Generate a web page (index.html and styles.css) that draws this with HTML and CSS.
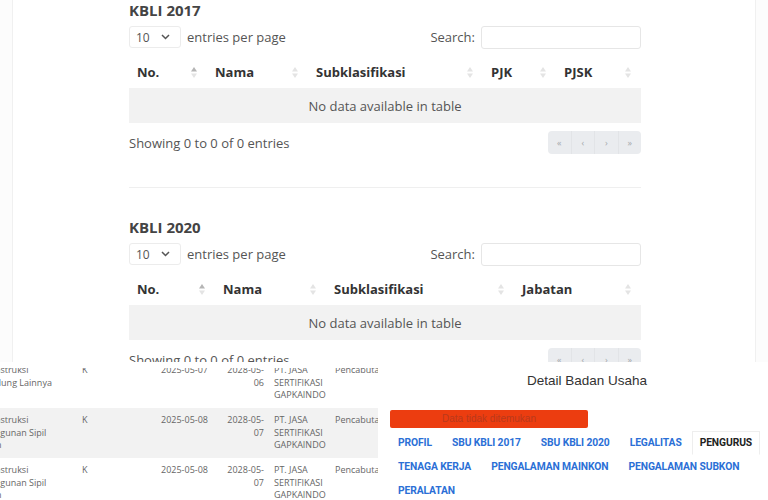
FILE: index.html
```html
<!DOCTYPE html>
<html lang="id">
<head>
    <meta charset="UTF-8">
    <meta name="viewport" content="width=device-width, initial-scale=1.0">
    <title>KBLI</title>
    <link rel="stylesheet" href="styles.css">
</head>
<body>
    <div class="top-panel">
        <section class="kbli">
            <h3>KBLI 2017</h3>
            <div class="dt-top">
                <label class="length">
                    <span class="select">10
                        <svg width="9" height="6" viewBox="0 0 9 6"><path d="M1 1l3.5 3.5L8 1" fill="none" stroke="#555" stroke-width="1.5"/></svg>
                    </span>
                    entries per page
                </label>
                <label class="search">Search: <input type="text"></label>
            </div>
            <table class="dt">
                <colgroup>
                    <col style="width:78px"><col style="width:101px"><col style="width:175px"><col style="width:73px"><col style="width:85px">
                </colgroup>
                <thead>
                    <tr>
                        <th><div class="th">No. <svg class="sort asc" width="6" height="11" viewBox="0 0 6 11"><path class="up" d="M0 4.5L3 0l3 4.5z"/><path class="down" d="M0 6.5L3 11l3-4.5z"/></svg></div></th>
                        <th><div class="th">Nama <svg class="sort" width="6" height="11" viewBox="0 0 6 11"><path class="up" d="M0 4.5L3 0l3 4.5z"/><path class="down" d="M0 6.5L3 11l3-4.5z"/></svg></div></th>
                        <th><div class="th">Subklasifikasi <svg class="sort" width="6" height="11" viewBox="0 0 6 11"><path class="up" d="M0 4.5L3 0l3 4.5z"/><path class="down" d="M0 6.5L3 11l3-4.5z"/></svg></div></th>
                        <th><div class="th">PJK <svg class="sort" width="6" height="11" viewBox="0 0 6 11"><path class="up" d="M0 4.5L3 0l3 4.5z"/><path class="down" d="M0 6.5L3 11l3-4.5z"/></svg></div></th>
                        <th><div class="th">PJSK <svg class="sort" width="6" height="11" viewBox="0 0 6 11"><path class="up" d="M0 4.5L3 0l3 4.5z"/><path class="down" d="M0 6.5L3 11l3-4.5z"/></svg></div></th>
                    </tr>
                </thead>
                <tbody>
                    <tr><td colspan="5" class="empty">No data available in table</td></tr>
                </tbody>
            </table>
            <div class="dt-bottom">
                <span>Showing 0 to 0 of 0 entries</span>
                <div class="pager"><span>«</span><span>‹</span><span>›</span><span>»</span></div>
            </div>
        </section>

        <hr class="divider">

        <section class="kbli">
            <h3>KBLI 2020</h3>
            <div class="dt-top">
                <label class="length">
                    <span class="select">10
                        <svg width="9" height="6" viewBox="0 0 9 6"><path d="M1 1l3.5 3.5L8 1" fill="none" stroke="#555" stroke-width="1.5"/></svg>
                    </span>
                    entries per page
                </label>
                <label class="search">Search: <input type="text"></label>
            </div>
            <table class="dt">
                <colgroup>
                    <col style="width:86px"><col style="width:111px"><col style="width:188px"><col style="width:127px">
                </colgroup>
                <thead>
                    <tr>
                        <th><div class="th">No. <svg class="sort asc" width="6" height="11" viewBox="0 0 6 11"><path class="up" d="M0 4.5L3 0l3 4.5z"/><path class="down" d="M0 6.5L3 11l3-4.5z"/></svg></div></th>
                        <th><div class="th">Nama <svg class="sort" width="6" height="11" viewBox="0 0 6 11"><path class="up" d="M0 4.5L3 0l3 4.5z"/><path class="down" d="M0 6.5L3 11l3-4.5z"/></svg></div></th>
                        <th><div class="th">Subklasifikasi <svg class="sort" width="6" height="11" viewBox="0 0 6 11"><path class="up" d="M0 4.5L3 0l3 4.5z"/><path class="down" d="M0 6.5L3 11l3-4.5z"/></svg></div></th>
                        <th><div class="th">Jabatan <svg class="sort" width="6" height="11" viewBox="0 0 6 11"><path class="up" d="M0 4.5L3 0l3 4.5z"/><path class="down" d="M0 6.5L3 11l3-4.5z"/></svg></div></th>
                    </tr>
                </thead>
                <tbody>
                    <tr><td colspan="4" class="empty">No data available in table</td></tr>
                </tbody>
            </table>
            <div class="dt-bottom">
                <span>Showing 0 to 0 of 0 entries</span>
                <div class="pager"><span>«</span><span>‹</span><span>›</span><span>»</span></div>
            </div>
        </section>
    </div>

    <div class="bottom">
        <div class="shot-left">
            <div class="clip">
                <table class="sbu">
                    <colgroup>
                        <col style="width:98px"><col style="width:74px"><col style="width:62px"><col style="width:56px"><col style="width:62px"><col style="width:70px">
                    </colgroup>
                    <tbody>
                        <tr>
                            <td>Konstruksi<br>Gedung Lainnya</td>
                            <td>K</td>
                            <td class="num">2025-05-07</td>
                            <td class="num end">2028-05-06</td>
                            <td class="lsp">PT. JASA SERTIFIKASI GAPKAINDO</td>
                            <td class="status">Pencabutan</td>
                        </tr>
                        <tr class="odd">
                            <td>Konstruksi<br>Bangunan Sipil<br>Lain</td>
                            <td>K</td>
                            <td class="num">2025-05-08</td>
                            <td class="num end">2028-05-07</td>
                            <td class="lsp">PT. JASA SERTIFIKASI GAPKAINDO</td>
                            <td class="status">Pencabutan</td>
                        </tr>
                        <tr>
                            <td>Konstruksi<br>Bangunan Sipil<br>Lain</td>
                            <td>K</td>
                            <td class="num">2025-05-08</td>
                            <td class="num end">2028-05-07</td>
                            <td class="lsp">PT. JASA SERTIFIKASI GAPKAINDO</td>
                            <td class="status">Pencabutan</td>
                        </tr>
                    </tbody>
                </table>
            </div>
        </div>

        <div class="shot-right">
            <div class="detail-title">Detail Badan Usaha</div>
            <div class="alert">Data tidak ditemukan</div>
            <div class="tabs">
                <span class="tab">PROFIL</span>
                <span class="tab">SBU KBLI 2017</span>
                <span class="tab">SBU KBLI 2020</span>
                <span class="tab">LEGALITAS</span>
                <span class="tab active">PENGURUS</span>
                <span class="tab">TENAGA KERJA</span>
                <span class="tab">PENGALAMAN MAINKON</span>
                <span class="tab">PENGALAMAN SUBKON</span>
                <span class="tab">PERALATAN</span>
            </div>
        </div>
    </div>
</body>
</html>
```

FILE: styles.css
```css
* {
    margin: 0;
    padding: 0;
    box-sizing: border-box;
}

body {
    width: 768px;
    height: 500px;
    overflow: hidden;
    background-color: #fcfcfc;
    font-family: "Open Sans", "Noto Sans", sans-serif;
    color: #555;
}

/* top screenshot: the two KBLI tables */

.top-panel {
    height: 362px;
    margin: 0 12px;
    padding-left: 116px;
    background: #fff;
    border-left: 1px solid #f0f0f0;
    border-right: 1px solid #f0f0f0;
    overflow: hidden;
}

.kbli {
    width: 512px;
}

.kbli h3 {
    font-size: 15px;
    line-height: 20px;
    font-weight: 700;
    color: #444;
}

.dt-top {
    display: flex;
    justify-content: space-between;
    align-items: center;
    height: 22px;
    margin: 6px 0 10px;
    font-size: 13px;
}

.length {
    display: flex;
    align-items: center;
    gap: 6px;
}

.select {
    display: flex;
    align-items: center;
    justify-content: space-between;
    width: 52px;
    height: 22px;
    padding: 0 10px 0 6px;
    border: 1px solid #ececec;
    border-radius: 3px;
    font-size: 12px;
}

.search {
    display: flex;
    align-items: center;
    gap: 6px;
}

.search input {
    width: 160px;
    height: 23px;
    border: 1px solid #e6e6e6;
    border-radius: 3px;
}

.dt {
    width: 512px;
    table-layout: fixed;
    border-collapse: collapse;
    font-size: 13px;
}

.dt th {
    height: 30px;
    padding: 0 10px 2px 8px;
    font-weight: 700;
    color: #333;
    text-align: left;
}

.th {
    display: flex;
    justify-content: space-between;
    align-items: center;
}

.sort path {
    fill: #e4e4e4;
}

.sort.asc .up {
    fill: #b5b5b5;
}

.dt .empty {
    height: 35px;
    background-color: #f2f2f2;
    text-align: center;
    color: #555;
}

.dt-bottom {
    display: flex;
    justify-content: space-between;
    align-items: center;
    margin-top: 8px;
    font-size: 13px;
}

.pager {
    display: flex;
    width: 93px;
    height: 23px;
    background-color: #eaecef;
    border-radius: 4px;
}

.pager span {
    flex: 1;
    display: flex;
    align-items: center;
    justify-content: center;
    font-size: 9px;
    color: #a5a9ad;
    border-left: 1px solid #e2e4e7;
}

.pager span:first-child {
    border-left: none;
}

.divider {
    width: 512px;
    margin: 33px 0 29px;
    border: none;
    border-top: 1px solid #efefef;
}

/* bottom row: two cropped screenshots */

.bottom {
    display: flex;
    height: 138px;
}

.shot-left {
    width: 378px;
    background: #fff;
    padding-top: 6px;
}

.shot-left .clip {
    height: 132px;
    overflow: hidden;
}

.sbu {
    width: 422px;
    margin: -10px 0 0 -22px;
    table-layout: fixed;
    border-collapse: collapse;
    font-size: 9px;
    line-height: 12.5px;
    color: #666;
}

.sbu td {
    padding: 6px 4px 6.5px 6px;
    vertical-align: top;
}

.sbu td.num {
    text-align: right;
}

.sbu td.end {
    padding-left: 12px;
}

.sbu td.status {
    padding-left: 5px;
    white-space: nowrap;
}

.sbu tr.odd td {
    background-color: #f2f2f2;
}

.shot-right {
    flex: 1;
    background: #fff;
    padding-top: 10px;
}

.detail-title {
    padding-left: 28px;
    text-align: center;
    font-family: "Liberation Sans", Arial, sans-serif;
    font-size: 13.5px;
    line-height: 17px;
    color: #333;
}

.alert {
    width: 198px;
    height: 18px;
    margin: 21px 0 3px 12px;
    background-color: #ec3d10;
    border-radius: 2px;
    text-align: center;
    font-family: "Liberation Sans", Arial, sans-serif;
    font-size: 10px;
    line-height: 18px;
    color: #b9391c;
}

.tabs {
    display: flex;
    flex-wrap: wrap;
    padding-left: 10px;
}

.tab {
    padding: 0 10px;
    line-height: 24px;
    font-family: Roboto, sans-serif;
    font-size: 10.3px;
    font-weight: 700;
    letter-spacing: -0.1px;
    color: #2b6fd6;
}

.tab.active {
    color: #222;
    background: #fff;
    border: 1px solid #eee;
    border-bottom-color: #fff;
    line-height: 22px;
    padding: 0 7px;
}
```
